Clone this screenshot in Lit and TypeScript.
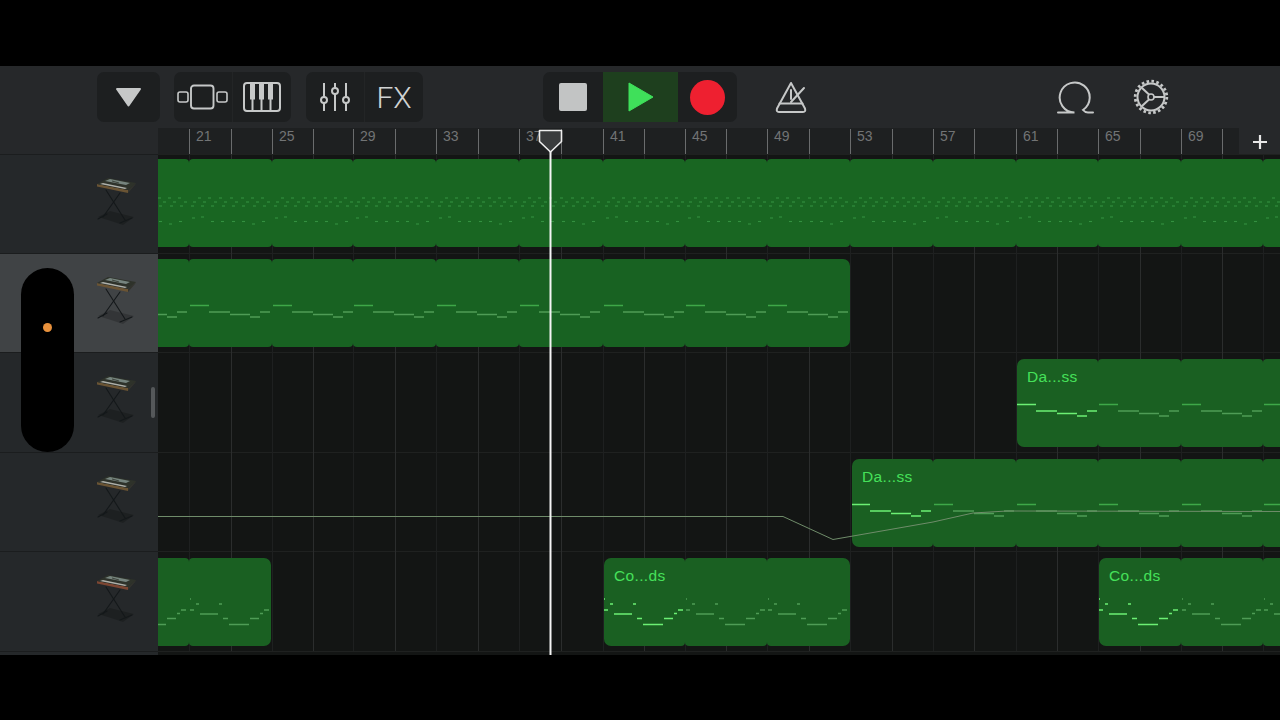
import { LitElement, html, css, svg } from "lit";
import { customElement } from "lit/decorators.js";

const LX = 158;
const MAJOR = [189, 272, 353, 436, 519, 603, 685, 767, 850, 933, 1016, 1098, 1181, 1263];
const LABELS = [21, 25, 29, 33, 37, 41, 45, 49, 53, 57, 61, 65, 69];
const MINOR = [231, 313, 395, 478, 561, 644, 726, 809, 892, 974, 1057, 1140, 1222];
const MELODY: number[][] = [[1, 20, 52.5], [20, 41, 59], [41, 61, 61.5], [61, 71, 64], [71, 81, 59]];
const CHORDS: number[][] = [[1, 2, 48], [1, 5, 59], [7, 10, 53], [11, 29, 63], [30, 33, 53], [34, 39, 67.5], [40, 60, 73.5], [61, 70, 67.5], [71, 74, 62.5], [75, 80, 59]];
const DOTS: number[][] = [];
for (const o of [9, 19, 30, 41, 52, 62, 72]) DOTS.push([o, o + 3, 44]);
for (const o of [4, 14, 25, 35, 46, 57, 67, 78]) DOTS.push([o, o + 3, 48]);
for (const o of [2, 12, 22, 33, 43, 53, 64, 74]) DOTS.push([o, o + 3, 52]);
[[3, 64], [12, 63], [22, 67.5], [32, 67.5], [43, 67.5], [53, 67.5], [63, 70], [73, 67.5]].forEach(([o, y]) => DOTS.push([o, o + 3, y]));

type Region = { start: number; end: number; label?: string };
type Row = { h: number; top: number; kind: string; regions: Region[]; selected?: boolean; fill: string };
const ROWS: Row[] = [
  { h: 99, top: 5, kind: "dots", fill: "#196622", regions: [{ start: 100, end: 1400 }] },
  { h: 99, top: 6, kind: "melody", fill: "#186222", selected: true, regions: [{ start: 100, end: 850 }] },
  { h: 100, top: 7, kind: "melody", fill: "#1a6022", regions: [{ start: 1017, end: 1400, label: "Da...ss" }] },
  { h: 99, top: 7, kind: "melody", fill: "#1a6022", regions: [{ start: 852, end: 1400, label: "Da...ss" }] },
  { h: 100, top: 7, kind: "chords", fill: "#1a6022", regions: [{ start: 100, end: 271 }, { start: 604, end: 850, label: "Co...ds" }, { start: 1099, end: 1400, label: "Co...ds" }] },
];

@customElement("app-root")
export class AppRoot extends LitElement {
  static styles = css`
    :host { display: block; position: relative; width: 1280px; height: 720px; background: #000; overflow: hidden; font-family: "Liberation Sans", Arial, sans-serif; }
    .bar-black { height: 66px; }
    .toolbar { height: 62px; background: #26282a; display: flex; align-items: flex-start; padding: 6px 0 0 97px; box-sizing: border-box; }
    .btn { height: 50px; background: #1d1f20; border-radius: 7px; display: flex; flex: none; overflow: hidden; }
    .b1 { width: 63px; margin-right: 14px; }
    .b2 { width: 117px; margin-right: 15px; }
    .b3 { width: 117px; margin-right: 120px; }
    .b4 { width: 194px; margin-right: 38px; }
    .cell { display: flex; align-items: center; justify-content: center; flex: 1 1 0; }
    .div { border-left: 1px solid #232526; }
    .fx { font-family: Roboto, "Liberation Sans", sans-serif; font-weight: 300; font-size: 30px; color: #d0d2d2; }
    .stop { flex: 0 0 60px; }
    .play { flex: 0 0 75px; background: #1e3f1e; }
    .rec { flex: 0 0 59px; }
    .stop-sq { width: 28px; height: 28px; border-radius: 2px; background: #c2c4c4; }
    .rec-dot { width: 35px; height: 35px; border-radius: 50%; background: #ee2030; }
    .icon { display: block; flex: none; }
    .top-9 { margin-top: 9px; }
    .top-7 { margin-top: 7px; }
    .top-2 { margin-top: 2px; }
    .metro { margin-right: 250px; }
    .loop { margin-right: 38px; }

    .ruler-row { height: 26px; display: grid; grid-template-columns: 158px 1fr 41px; background: #26282a; }
    .ruler { position: relative; background: #1e2021; overflow: hidden; }
    .tick { position: absolute; top: 1px; bottom: 0; width: 1px; background: #6a6c6d; }
    .num { position: absolute; top: 0; font-size: 14px; line-height: 16px; color: #727475; }
    .plus { display: flex; align-items: center; justify-content: center; }

    .tracks { position: relative; height: 501px; overflow: hidden; background: #131514; }
    .track { display: grid; grid-template-columns: 158px 1fr; }
    .head { display: flex; justify-content: flex-end; background: #25282a; box-shadow: inset 0 1px 0 #1b1d1e; padding: 24px 20px 0 0; box-sizing: border-box; }
    .head.sel { background: #404345; }
    .lane { position: relative; overflow: hidden; background: #131514; box-shadow: inset 0 1px 0 #1f2120; }
    .grid, .overlay { position: absolute; left: 0; top: 0; width: 1122px; height: 100%; }
    .seg { position: absolute; border-radius: 4px; }
    .seg.first { border-top-left-radius: 7px; border-bottom-left-radius: 7px; }
    .seg.last { border-top-right-radius: 7px; border-bottom-right-radius: 7px; }
    .name { position: absolute; left: 10px; top: 9px; font-size: 15.5px; line-height: 18px; letter-spacing: 0.35px; color: #46e05a; white-space: nowrap; }

    .pill { position: absolute; left: 21px; top: 114px; width: 53px; height: 184px; border-radius: 27px; background: #000; }
    .led { position: absolute; left: 22px; top: 55px; width: 9px; height: 9px; border-radius: 50%; background: #e8913c; }
    .scroll { position: absolute; left: 151px; top: 233px; width: 4px; height: 31px; border-radius: 2px; background: #55585a; }
    .playhead { position: absolute; left: 538px; top: 129px; width: 25px; height: 526px; }
  `;

  private seg(row: Row, r: Region) {
    const cuts = [r.start, ...MAJOR.filter((m) => m > r.start + 3 && m < r.end - 3), r.end];
    const parts = [];
    for (let i = 0; i < cuts.length - 1; i++) {
      const cls = `seg ${i === 0 ? "first" : ""} ${i === cuts.length - 2 ? "last" : ""}`;
      parts.push(html`<div class=${cls} style="left:${cuts[i] - LX}px;width:${cuts[i + 1] - cuts[i]}px;top:${row.top}px;height:87.5px;background:${row.fill}">
        ${i === 0 && r.label ? html`<span class="name">${r.label}</span>` : ""}
      </div>`);
    }
    return parts;
  }

  private notes(row: Row) {
    const pattern = row.kind === "dots" ? DOTS : row.kind === "melody" ? MELODY : CHORDS;
    const w = row.kind === "dots" ? 1.1 : 1.5;
    const out = [];
    const starts = [106, ...MAJOR];
    for (const r of row.regions) {
      for (const x0 of starts) {
        const first = !!r.label && Math.abs(x0 - r.start) < 6;
        for (const [a, b, y] of pattern) {
          const x1 = Math.max(x0 + a, Math.max(r.start, LX));
          const x2 = Math.min(x0 + b, r.end);
          if (x2 <= x1) continue;
          let c = "#4f9c56";
          if (row.kind === "dots") c = "#349040";
          else if (first) c = "#6cf074";
          else if (y === 52.5) c = "#3ea848";
          out.push(svg`<line x1=${x1 - LX} x2=${x2 - LX} y1=${y} y2=${y} stroke=${c} stroke-width=${w}></line>`);
        }
      }
    }
    return out;
  }

  private keyboard(red: boolean) {
    return html`<svg class="icon" width="41" height="50" viewBox="0 0 41 50">
      <polygon points="1,39 13,33 37,39 26,47 14,43" fill="#000" opacity="0.2"></polygon>
      <g stroke="#14181a" stroke-width="1.1" fill="none" stroke-linecap="round">
        <line x1="9" y1="12" x2="28" y2="42"></line>
        <line x1="23" y1="15" x2="6" y2="39"></line>
        <line x1="1" y1="41" x2="10" y2="36"></line>
        <line x1="23" y1="45" x2="35" y2="40"></line>
      </g>
      <polygon points="0,8.5 0,6 31,12 31,15" fill=${red ? "#7c4632" : "#6a5434"}></polygon>
      <polygon points="31,12 39,5 38,7 31,15" fill="#34342e"></polygon>
      <polygon points="0,6 11,0 39,5 31,12" fill="#2e322a"></polygon>
      <polygon points="8,3 13,1 33,5 29,7" fill="#76847e"></polygon>
      <polygon points="3,6 6,5 30,10 28,11" fill="#aeb0aa"></polygon>
      <line x1="15" y1="3" x2="22" y2="5" stroke="#3e443c" stroke-width="1"></line>
    </svg>`;
  }

  render() {
    const c = "#c6c8c8";
    return html`
      <div class="bar-black"></div>
      <div class="toolbar">
        <div class="btn b1"><div class="cell">
          <svg class="icon" width="27" height="20" viewBox="0 0 27 20"><path d="M2 2 H25 L13.5 18.5 Z" fill="${c}" stroke="${c}" stroke-width="2" stroke-linejoin="round"></path></svg>
        </div></div>
        <div class="btn b2">
          <div class="cell">
            <svg class="icon" width="54" height="26" viewBox="0 0 54 26" fill="none" stroke="${c}" stroke-width="1.6">
              <rect x="2" y="8" width="10" height="10" rx="2"></rect>
              <rect x="15" y="1.5" width="22.5" height="23" rx="3" stroke-width="1.9"></rect>
              <rect x="41" y="8" width="10" height="10" rx="2"></rect>
            </svg>
          </div>
          <div class="cell div">
            <svg class="icon" width="38" height="30" viewBox="0 0 38 30" fill="none" stroke="${c}" stroke-width="2">
              <rect x="1" y="1" width="36" height="28" rx="3"></rect>
              <path d="M9.5 17 V29 M18.5 17 V29 M27.5 17 V29"></path>
              <path d="M9.5 1 V17.5 M18.5 1 V17.5 M27.5 1 V17.5" stroke-width="5"></path>
            </svg>
          </div>
        </div>
        <div class="btn b3">
          <div class="cell">
            <svg class="icon" width="32" height="30" viewBox="0 0 32 30" fill="none" stroke="${c}" stroke-width="2">
              <path d="M5 1 V29 M16 1 V29 M27 1 V29"></path>
              <circle cx="5" cy="18" r="3" fill="#1d1f20"></circle>
              <circle cx="16" cy="9" r="3" fill="#1d1f20"></circle>
              <circle cx="27" cy="18" r="3" fill="#1d1f20"></circle>
            </svg>
          </div>
          <div class="cell div"><span class="fx">FX</span></div>
        </div>
        <div class="btn b4">
          <div class="cell stop"><div class="stop-sq"></div></div>
          <div class="cell play">
            <svg class="icon" width="26" height="30" viewBox="0 0 26 30"><path d="M1 1 L25 15 L1 29 Z" fill="#3fe05a" stroke="#3fe05a" stroke-width="1" stroke-linejoin="round"></path></svg>
          </div>
          <div class="cell rec"><div class="rec-dot"></div></div>
        </div>
        <svg class="icon metro top-9" width="32" height="34" viewBox="0 0 32 34" fill="none" stroke="${c}" stroke-width="2" stroke-linejoin="round" stroke-linecap="round">
          <path d="M16 2 L30 27.5 Q31 31 28 31 H4 Q1 31 2 27.5 Z"></path>
          <path d="M4.5 22.5 H27.5"></path>
          <path d="M16 9 V18"></path>
          <path d="M16 21 L29 7"></path>
        </svg>
        <svg class="icon loop top-9" width="38" height="34" viewBox="0 0 38 34" fill="none" stroke="${c}" stroke-width="2">
          <path d="M1 31.5 H17.5 A15 15 0 1 1 26 29 Q28 31.5 31 31.5 H36" stroke-linecap="round"></path>
        </svg>
        <svg class="icon top-7" width="36" height="36" viewBox="0 0 36 36" fill="none" stroke="${c}">
          <circle cx="18" cy="18" r="13.5" stroke-width="2"></circle>
          <circle cx="18" cy="18" r="15.8" stroke-width="2.8" stroke-dasharray="2.6 2.36"></circle>
          <circle cx="18" cy="18" r="3" stroke-width="1.6"></circle>
          <path d="M21 18 H31 M16 15.5 L9 9 M16 20.5 L9 27" stroke-width="2"></path>
        </svg>
      </div>
      <div class="ruler-row">
        <div></div>
        <div class="ruler">
          ${MAJOR.slice(0, 13).map((x) => html`<div class="tick" style="left:${x - LX}px"></div>`)}
          ${MINOR.map((x) => html`<div class="tick" style="left:${x - LX}px"></div>`)}
          ${LABELS.map((n, i) => html`<span class="num" style="left:${MAJOR[i] - LX + 7}px">${n}</span>`)}
        </div>
        <div class="plus">
          <svg class="icon top-2" width="14" height="14" viewBox="0 0 14 14"><path d="M7 0 V14 M0 7 H14" stroke="#e8e8e8" stroke-width="2.2"></path></svg>
        </div>
      </div>
      <div class="tracks">
        ${ROWS.map((row, i) => html`
          <div class="track" style="height:${row.h}px">
            <div class="head ${row.selected ? "sel" : ""}">${this.keyboard(i === 4)}</div>
            <div class="lane">
              <svg class="grid" viewBox="0 0 1122 ${row.h}" preserveAspectRatio="none">
                ${MAJOR.map((x) => svg`<line x1=${x - LX + 0.5} x2=${x - LX + 0.5} y1="0" y2=${row.h} stroke="#1e2020"></line>`)}
                ${MINOR.map((x) => svg`<line x1=${x - LX + 0.5} x2=${x - LX + 0.5} y1="0" y2=${row.h} stroke="#2b2d2d"></line>`)}
              </svg>
              ${row.regions.map((r) => this.seg(row, r))}
              <svg class="overlay" viewBox="0 0 1122 ${row.h}" preserveAspectRatio="none">
                ${this.notes(row)}
                ${i === 3 ? svg`<polyline points="0,64.5 625,64.5 675,87.5 775,70 815,61 849,59 1122,59.5" fill="none" stroke="#6f8c6a" stroke-width="1"></polyline>` : ""}
              </svg>
            </div>
          </div>`)}
        <div class="track" style="height:4px"><div class="head"></div><div class="lane"></div></div>
        <div class="pill"><div class="led"></div></div>
        <div class="scroll"></div>
      </div>
      <svg class="playhead" viewBox="0 0 25 526">
        <path d="M12.5 22 V526" stroke="#f4f4f4" stroke-width="2"></path>
        <path d="M1.5 1.5 H23.5 V12.5 L12.5 23 L1.5 12.5 Z" fill="#3a3c3d" stroke="#eeeeee" stroke-width="1.6" stroke-linejoin="round"></path>
      </svg>
    `;
  }
}
